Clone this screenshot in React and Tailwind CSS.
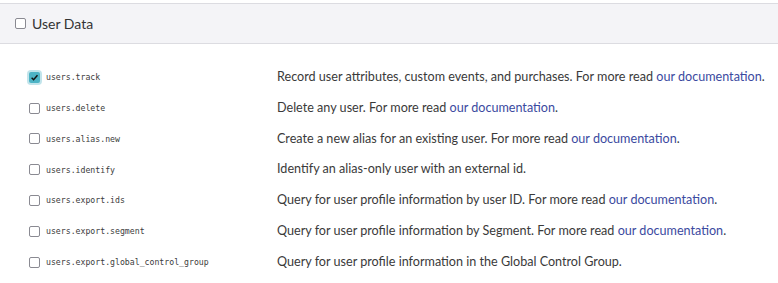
import React from "react";

const rows = [
  {
    name: "users.track",
    checked: true,
    text: "Record user attributes, custom events, and purchases. For more read ",
    link: true,
  },
  { name: "users.delete", text: "Delete any user. For more read ", link: true },
  {
    name: "users.alias.new",
    text: "Create a new alias for an existing user. For more read ",
    link: true,
  },
  { name: "users.identify", text: "Identify an alias-only user with an external id." },
  {
    name: "users.export.ids",
    text: "Query for user profile information by user ID. For more read ",
    link: true,
  },
  {
    name: "users.export.segment",
    text: "Query for user profile information by Segment. For more read ",
    link: true,
  },
  {
    name: "users.export.global_control_group",
    text: "Query for user profile information in the Global Control Group.",
  },
];

const Box = ({ checked }) =>
  checked ? (
    <span className="w-[11px] h-[11px] rounded-[2px] bg-[#4db3c5] flex items-center justify-center shadow-[0_0_0_2px_rgba(77,179,197,0.35)] shrink-0">
      <svg width="9" height="9" viewBox="0 0 10 10">
        <path d="M1.8 5.2 L4 7.4 L8.3 2.4" fill="none" stroke="#111" strokeWidth="1.6" />
      </svg>
    </span>
  ) : (
    <span className="w-[11px] h-[11px] rounded-[2px] border border-[#8a8a92] bg-white shrink-0" />
  );

export default function App() {
  return (
    <div className="bg-white w-[778px] h-[283px] pt-[3px] font-['Lato','Noto_Sans',sans-serif]">
      <div className="h-[41px] bg-[#f4f4f7] border-y border-[#dcdce1] flex items-center pl-[15px] gap-[6px]">
        <Box />
        <span className="text-[14px] text-[#333]">User Data</span>
      </div>
      <div className="pt-[18px]">
        {rows.map((r) => (
          <div key={r.name} className="h-[30.8px] flex items-center">
            <div className="w-[277px] shrink-0 flex items-center pl-[29px] gap-[6px]">
              <Box checked={r.checked} />
              <span className="font-['DejaVu_Sans_Mono',monospace] text-[8.2px] text-[#3c3c3c]">
                {r.name}
              </span>
            </div>
            <div className="text-[12.6px] text-[#3a3a3a] whitespace-nowrap">
              {r.text}
              {r.link && (
                <>
                  <a className="text-[#3b4aa0]">our documentation</a>.
                </>
              )}
            </div>
          </div>
        ))}
      </div>
    </div>
  );
}
